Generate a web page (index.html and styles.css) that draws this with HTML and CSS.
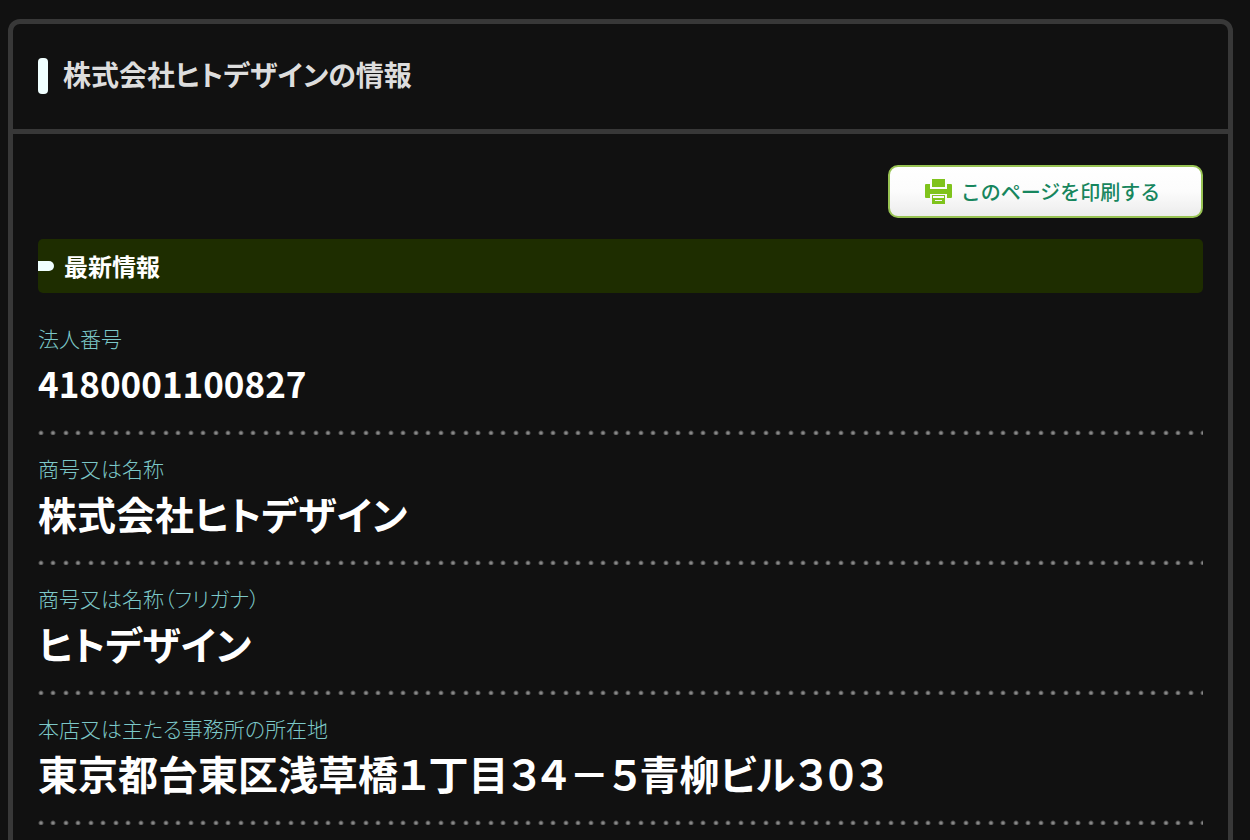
FILE: index.html
```html
<!DOCTYPE html>
<html lang="ja">

<head>
    <meta charset="utf-8">
    <title>株式会社ヒトデザインの情報</title>
    <link rel="stylesheet" href="styles.css">
</head>

<body>
    <main class="box">
        <div class="box-head">
            <h1>株式会社ヒトデザインの情報</h1>
        </div>
        <div class="box-body">
            <div class="print">
                <button type="button" class="print-btn" onclick="window.print();">
                    <svg class="print-icon" viewBox="0 0 27 25" aria-hidden="true">
                        <path d="M7 0h13v8H7z" />
                        <path d="M0 6q0-1 1-1h4v5h17V5h4q1 0 1 1v12q0 1-1 1h-4v-4H5v4H1q-1 0-1-1z" />
                        <path fill-rule="evenodd" d="M7 16h13v9H7zM8 17v2h11v-2zM10 21v1h7v-1z" />
                    </svg>
                    <span>このページを印刷する</span>
                </button>
            </div>

            <h2>最新情報</h2>
            <dl class="info">
                <div class="row">
                    <dt>法人番号</dt>
                    <dd class="number">4180001100827</dd>
                </div>
                <div class="row">
                    <dt>商号又は名称</dt>
                    <dd>株式会社ヒトデザイン</dd>
                </div>
                <div class="row">
                    <dt>商号又は名称（フリガナ）</dt>
                    <dd>ヒトデザイン</dd>
                </div>
                <div class="row">
                    <dt>本店又は主たる事務所の所在地</dt>
                    <dd class="address">東京都台東区浅草橋１丁目３４－５青柳ビル３０３</dd>
                </div>
            </dl>
        </div>
    </main>
</body>

</html>
```

FILE: styles.css
```css
* {
    box-sizing: border-box;
}

body {
    margin: 0;
    padding: 19px 17px 0 8px;
    background-color: #111;
    color: #fff;
    font-family: "Noto Sans CJK JP", sans-serif;
    font-feature-settings: "palt";
}

.box {
    border: 5px solid #383838;
    border-radius: 12px;
}

.box-head {
    padding: 34px 25px 35px;
    border-bottom: 5px solid #383838;
}

h1 {
    display: flex;
    align-items: flex-start;
    gap: 15px;
    margin: 0;
    font-size: 28px;
    line-height: 32px;
    color: #ddd;
}

h1::before {
    content: "";
    width: 10px;
    height: 36px;
    border-radius: 4px;
    background-color: #f0ffff;
}

.box-body {
    padding: 31px 25px 40px;
}

.print {
    display: flex;
    justify-content: flex-end;
    margin-bottom: 21px;
}

.print-btn {
    display: flex;
    align-items: center;
    justify-content: center;
    gap: 9px;
    width: 315px;
    height: 53px;
    padding: 0 6px 0 0;
    border: 2px solid #98c353;
    border-radius: 10px;
    background: linear-gradient(#fff, #fcfcfc 50%, #ececec);
    color: #17865e;
    font-family: inherit;
    font-size: 20px;
    font-weight: 500;
    cursor: pointer;
}

.print-icon {
    width: 27px;
    height: 25px;
    fill: #7fc31c;
}

h2 {
    display: flex;
    align-items: center;
    gap: 10px;
    margin: 0 0 12px;
    border-radius: 5px;
    background-color: #1e2d00;
    font-size: 24px;
    line-height: 54px;
}

h2::before {
    content: "";
    width: 16px;
    height: 10px;
    border-radius: 0 5px 5px 0;
    background-color: #f0ffff;
}

.info {
    margin: 0;
}

.row {
    padding: 18px 0 22px;
    /* two dots per tile */
    background-image:
        radial-gradient(circle at 3px 3px, #888 1px, transparent 3px),
        radial-gradient(circle at 15px 3px, #888 1px, transparent 3px);
    background-size: 25px 5px;
    background-position: left bottom;
    background-repeat: repeat-x;
}

dt {
    font-size: 21px;
    font-weight: 300;
    line-height: 30px;
    color: #7cc8c8;
}

dd {
    margin: 0;
    font-size: 39px;
    font-weight: bold;
    line-height: 60px;
}

.number {
    font-size: 35px;
}

.address {
    font-size: 40px;
}
```
